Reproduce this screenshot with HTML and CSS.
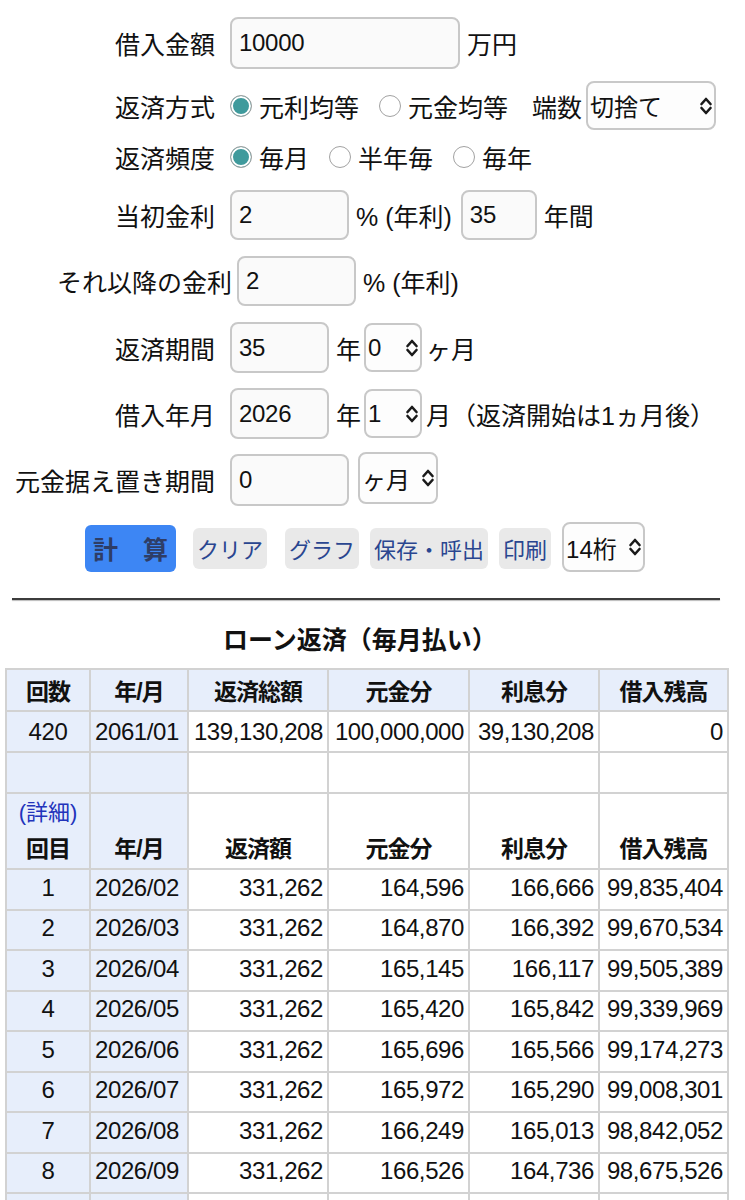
FILE: index.html
```html
<!DOCTYPE html>
<html lang="ja">
<head>
<meta charset="utf-8">
<title>ローン返済</title>
<link rel="stylesheet" href="styles.css">
</head>
<body>
<div class="form">
  <div class="row">
    <span class="label">借入金額</span>
    <input class="field w230" type="text" value="10000">
    <span class="unit">万円</span>
  </div>
  <div class="row">
    <span class="label">返済方式</span>
    <span class="opt"><span class="radio on"></span>元利均等</span>
    <span class="opt"><span class="radio"></span>元金均等</span>
    <span class="unit hasu">端数</span>
    <div class="select s130"><span>切捨て</span><svg class="chev" viewBox="0 0 14 20" width="14" height="20"><path d="M2.5 8 L7 3 L11.5 8 M2.5 12 L7 17 L11.5 12"/></svg></div>
  </div>
  <div class="row">
    <span class="label">返済頻度</span>
    <span class="opt"><span class="radio on"></span>毎月</span>
    <span class="opt"><span class="radio"></span>半年毎</span>
    <span class="opt"><span class="radio"></span>毎年</span>
  </div>
  <div class="row">
    <span class="label">当初金利</span>
    <input class="field w119 h50" type="text" value="2">
    <span class="unit">% (年利)</span>
    <input class="field w76 h50 ml9" type="text" value="35">
    <span class="unit">年間</span>
  </div>
  <div class="row">
    <span class="label wide">それ以降の金利</span>
    <input class="field w119 h50" type="text" value="2">
    <span class="unit">% (年利)</span>
  </div>
  <div class="row">
    <span class="label">返済期間</span>
    <input class="field w99 h51" type="text" value="35">
    <span class="unit">年</span>
    <div class="select s58"><span>0</span><svg class="chev" viewBox="0 0 14 20" width="14" height="20"><path d="M2.5 8 L7 3 L11.5 8 M2.5 12 L7 17 L11.5 12"/></svg></div>
    <span class="unit tight">ヶ月</span>
  </div>
  <div class="row">
    <span class="label">借入年月</span>
    <input class="field w99 h51" type="text" value="2026">
    <span class="unit">年</span>
    <div class="select s58"><span>1</span><svg class="chev" viewBox="0 0 14 20" width="14" height="20"><path d="M2.5 8 L7 3 L11.5 8 M2.5 12 L7 17 L11.5 12"/></svg></div>
    <span class="unit tight">月（返済開始は1ヵ月後）</span>
  </div>
  <div class="row">
    <span class="label">元金据え置き期間</span>
    <input class="field w119" type="text" value="0">
    <div class="select s80 tall ml9"><span>ヶ月</span><svg class="chev" viewBox="0 0 14 20" width="14" height="20"><path d="M2.5 8 L7 3 L11.5 8 M2.5 12 L7 17 L11.5 12"/></svg></div>
  </div>
  <div class="row buttons">
    <button class="btn calc">計　算</button>
    <button class="btn gray clear">クリア</button>
    <button class="btn gray">グラフ</button>
    <button class="btn gray">保存・呼出</button>
    <button class="btn gray">印刷</button>
    <div class="select s83 tall50"><span>14桁</span><svg class="chev" viewBox="0 0 14 20" width="14" height="20"><path d="M2.5 8 L7 3 L11.5 8 M2.5 12 L7 17 L11.5 12"/></svg></div>
  </div>
</div>

<div class="rule"></div>
<h2 class="title">ローン返済（毎月払い）</h2>

<table class="loan">
  <colgroup>
    <col class="c84"><col class="c98"><col class="c140"><col class="c141"><col class="c130"><col class="c129">
  </colgroup>
  <tr class="head">
    <th>回数</th><th>年/月</th><th>返済総額</th><th>元金分</th><th>利息分</th><th>借入残高</th>
  </tr>
  <tr class="sum">
    <td class="k ctr">420</td><td class="k">2061/01</td><td class="num">139,130,208</td><td class="num">100,000,000</td><td class="num">39,130,208</td><td class="num">0</td>
  </tr>
  <tr class="sum">
    <td class="k"></td><td class="k"></td><td></td><td></td><td></td><td></td>
  </tr>
  <tr class="dhead">
    <th class="k"><a class="detail">(詳細)</a><br>回目</th><th class="k">年/月</th><th>返済額</th><th>元金分</th><th>利息分</th><th>借入残高</th>
  </tr>
  <tr class="data"><td class="k ctr">1</td><td class="k">2026/02</td><td class="num">331,262</td><td class="num">164,596</td><td class="num">166,666</td><td class="num">99,835,404</td></tr>
  <tr class="data"><td class="k ctr">2</td><td class="k">2026/03</td><td class="num">331,262</td><td class="num">164,870</td><td class="num">166,392</td><td class="num">99,670,534</td></tr>
  <tr class="data"><td class="k ctr">3</td><td class="k">2026/04</td><td class="num">331,262</td><td class="num">165,145</td><td class="num">166,117</td><td class="num">99,505,389</td></tr>
  <tr class="data"><td class="k ctr">4</td><td class="k">2026/05</td><td class="num">331,262</td><td class="num">165,420</td><td class="num">165,842</td><td class="num">99,339,969</td></tr>
  <tr class="data"><td class="k ctr">5</td><td class="k">2026/06</td><td class="num">331,262</td><td class="num">165,696</td><td class="num">165,566</td><td class="num">99,174,273</td></tr>
  <tr class="data"><td class="k ctr">6</td><td class="k">2026/07</td><td class="num">331,262</td><td class="num">165,972</td><td class="num">165,290</td><td class="num">99,008,301</td></tr>
  <tr class="data"><td class="k ctr">7</td><td class="k">2026/08</td><td class="num">331,262</td><td class="num">166,249</td><td class="num">165,013</td><td class="num">98,842,052</td></tr>
  <tr class="data"><td class="k ctr">8</td><td class="k">2026/09</td><td class="num">331,262</td><td class="num">166,526</td><td class="num">164,736</td><td class="num">98,675,526</td></tr>
  <tr class="data"><td class="k ctr"></td><td class="k"></td><td class="num"></td><td class="num"></td><td class="num"></td><td class="num"></td></tr>
</table>
</body>
</html>
```

FILE: styles.css
```css
* { box-sizing: border-box; }

body {
  margin: 0;
  background: #fff;
  color: #111;
  font-family: "Liberation Sans", "Noto Sans CJK JP", sans-serif;
  font-size: 24px;
}

.form {
  display: grid;
  grid-template-rows: 52px 45px 30px 58px 46px 59px 45px 60px 48px;
  row-gap: 14px;
  padding-top: 17px;
}

.row {
  display: flex;
  align-items: center;
}

.label {
  flex: none;
  width: 215px;
  margin-right: 15px;
  text-align: right;
  font-size: 25px;
  white-space: nowrap;
}
.label.wide { width: 232px; margin-right: 5px; }

.field {
  flex: none;
  height: 52px;
  border: 2px solid #c8c8c8;
  border-radius: 8px;
  background: #fafafa;
  color: #111;
  font-family: inherit;
  font-size: 24px;
  letter-spacing: -0.3px;
  padding: 0 7px;
  outline: none;
}
.w230 { width: 230px; }
.w119 { width: 119px; }
.w99 { width: 99px; }
.w76 { width: 76px; }
.h50 { height: 50px; }
.h51 { height: 51px; }
.ml9 { margin-left: 9px; }

.unit {
  margin-left: 7px;
  font-size: 25px;
  white-space: nowrap;
}
.unit.tight { margin-left: 4px; }
.unit.hasu { margin-left: 4px; margin-right: 4px; }

.opt {
  display: flex;
  align-items: center;
  font-size: 25px;
  margin-right: 20px;
  white-space: nowrap;
}
.opt:first-of-type { margin-left: 2px; }

.radio {
  flex: none;
  width: 22px;
  height: 22px;
  border-radius: 50%;
  border: 1.5px solid #a2a2a2;
  background: #fff;
  margin-right: 7px;
}
.radio.on {
  background: #3f9a9c;
  box-shadow: inset 0 0 0 2px #fff;
}

.select {
  flex: none;
  display: flex;
  align-items: center;
  justify-content: space-between;
  height: 49px;
  border: 2px solid #c8c8c8;
  border-radius: 8px;
  background: #fdfdfd;
  padding: 0 1px 0 2px;
  font-size: 24px;
  white-space: nowrap;
}
.select.s130 { width: 130px; }
.select.s58 { width: 58px; margin-left: 3px; }
.select.s80 { width: 80px; }
.select.s83 { width: 83px; }
.select.tall { height: 52px; margin-top: -4px; }
.select.tall50 { height: 50px; margin-top: -2px; }

.chev {
  flex: none;
  fill: none;
  stroke: #1a1a1a;
  stroke-width: 2.6;
  stroke-linecap: round;
  stroke-linejoin: round;
}

.buttons {
  padding-left: 85px;
  gap: 11px;
}

.btn {
  font-family: inherit;
  border: none;
  border-radius: 6px;
  cursor: pointer;
  white-space: nowrap;
}
.btn.calc {
  width: 91px;
  height: 47px;
  background: #3d86f4;
  color: #2e3d66;
  font-weight: bold;
  font-size: 25px;
  padding: 0;
  margin-right: 6px;
}
.btn.gray {
  height: 41px;
  background: #e9e9e9;
  color: #2a4690;
  font-size: 22px;
  padding: 0 4px;
}
.btn.clear { margin-right: 7px; }

.rule {
  margin: 26px 25px 0 12px;
  height: 2px;
  background: #3c3c3c;
  box-shadow: 0 1px 1px #bbb;
}

.title {
  margin: 25px 0 13px;
  width: 720px;
  text-align: center;
  font-size: 25px;
  font-weight: bold;
  line-height: 30px;
}

.loan {
  margin-left: 5px;
  width: 722px;
  table-layout: fixed;
  border-collapse: collapse;
  font-size: 24px;
  letter-spacing: -0.4px;
}
.c84 { width: 84px; }
.c98 { width: 98px; }
.c140 { width: 140px; }
.c141 { width: 141px; }
.c130 { width: 130px; }
.c129 { width: 129px; }

.loan th,
.loan td {
  border: 2px solid #d2d2d2;
  padding: 0 4px;
  white-space: nowrap;
  overflow: hidden;
}

.loan th { font-weight: bold; font-size: 23px; letter-spacing: -1px; text-align: center; }
.head th { background: #e7eefb; height: 42px; }
.sum td { height: 41px; }
.dhead th { height: 74px; vertical-align: bottom; line-height: 37px; }
.data td { height: 40.5px; padding-bottom: 3px; }

.loan .k { background: #e7eefb; }
.loan td.k { text-align: left; }
.loan td.ctr { text-align: center; }
.loan td.num { text-align: right; }

.detail {
  color: #2233bb;
  font-weight: normal;
  font-size: 22px;
  letter-spacing: 0;
}
```
